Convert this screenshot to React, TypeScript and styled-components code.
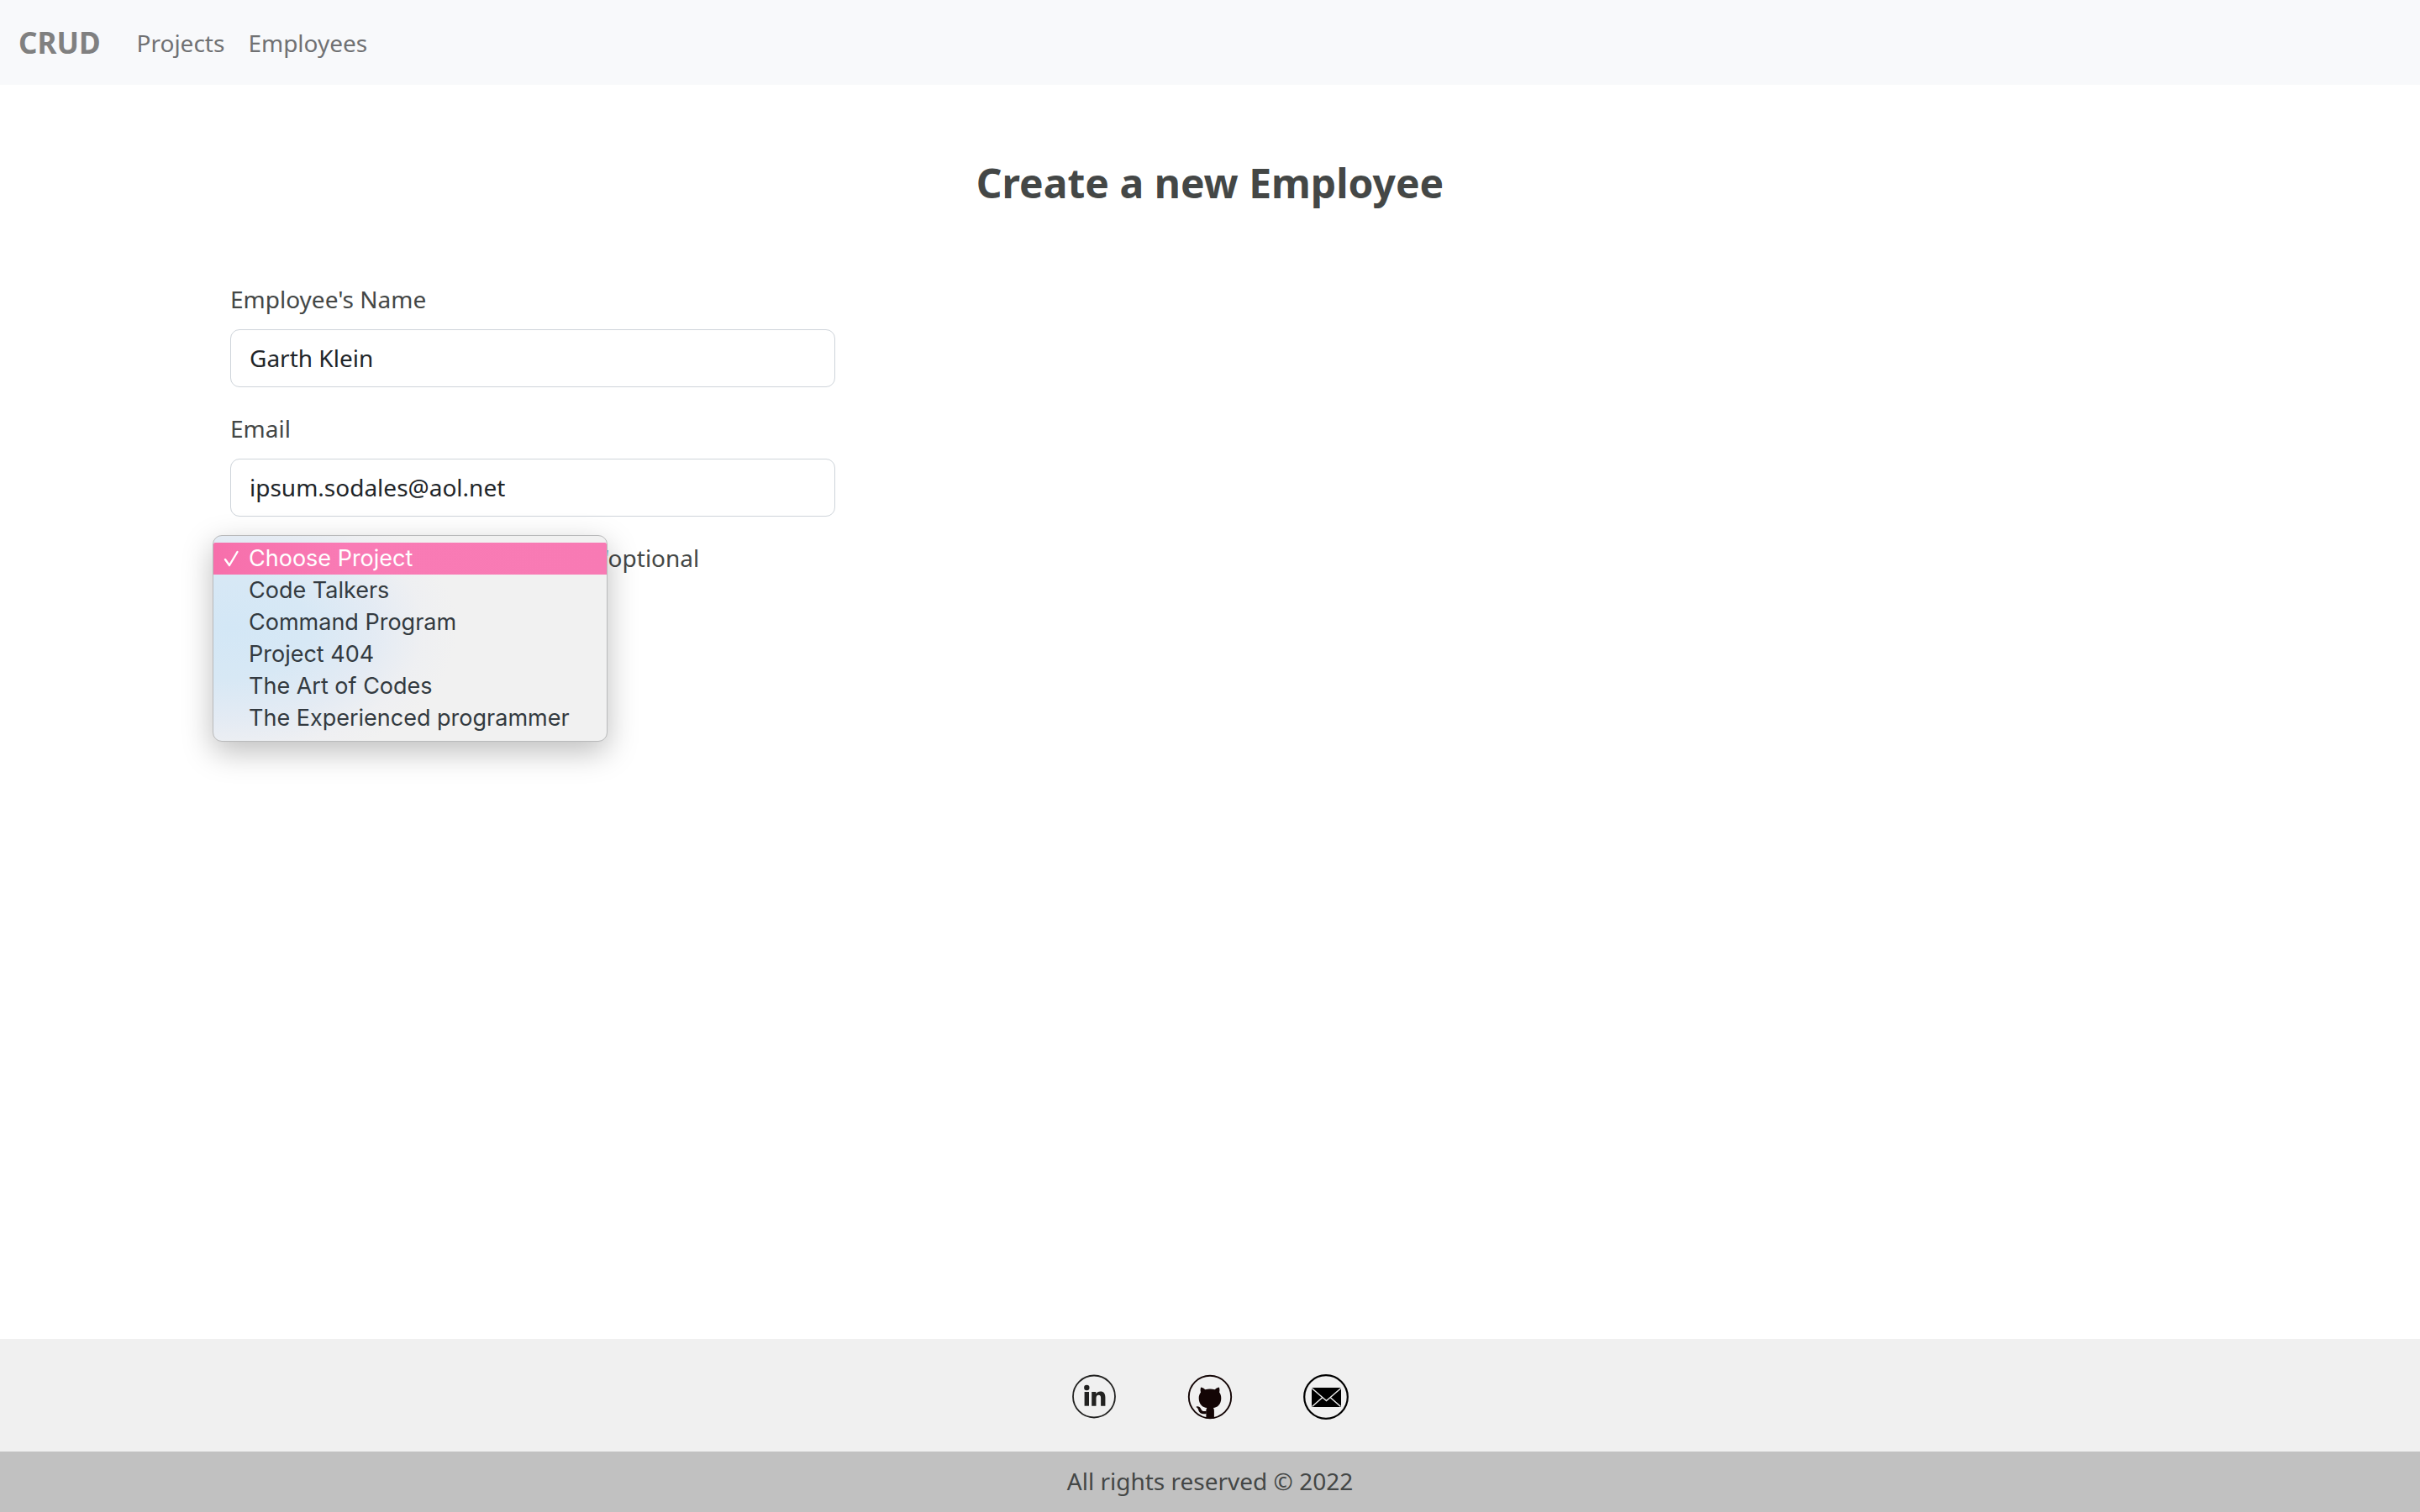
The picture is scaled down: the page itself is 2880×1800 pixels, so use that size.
import React from 'react';
import styled, { createGlobalStyle } from 'styled-components';

const GlobalStyle = createGlobalStyle`
  *, *::before, *::after { box-sizing: border-box; }
  body {
    margin: 0;
    background: #fff;
    color: #444746;
    font-family: "Noto Sans", "Open Sans", sans-serif;
    font-size: 28px;
    line-height: 43px;
  }
`;

const Page = styled.div`
  display: flex;
  flex-direction: column;
  min-height: 100vh;
`;

const Navbar = styled.nav`
  display: flex;
  align-items: center;
  gap: 43px;
  padding: 25px 22px 24px;
  background: #f8f9fb;
`;

const Brand = styled.a`
  color: #808080;
  font-size: 35px;
  font-weight: 700;
  line-height: 52px;
  text-decoration: none;
`;

const NavLinks = styled.div`
  display: flex;
  gap: 28px;
`;

const NavLink = styled.a`
  color: #707173;
  text-decoration: none;
`;

const Main = styled.main`
  flex: 1;
  width: 100%;
  max-width: 2376px;
  margin: 0 auto;
  padding: 87px 22px;
`;

const Title = styled.h1`
  margin: 0 0 87px;
  font-size: 48px;
  font-weight: 700;
  line-height: 60px;
  text-align: center;
`;

const Form = styled.form`
  display: flex;
  flex-direction: column;
  gap: 28px;
  max-width: 720px;
`;

const Field = styled.div`
  display: flex;
  flex-direction: column;
  gap: 14px;
  position: relative;
`;

const Label = styled.label<{ $indent?: boolean }>`
  padding-left: ${(p) => (p.$indent ? '445px' : '0')};
`;

const TextInput = styled.input`
  width: 100%;
  height: 69px;
  padding: 0 22px 2px;
  border: 1px solid #ced4da;
  border-radius: 11px;
  background: #fff;
  color: #212529;
  font: inherit;
  outline: none;
`;

const Menu = styled.div`
  position: absolute;
  top: -6px;
  left: -21px;
  width: 470px;
  padding: 8px 0;
  overflow: hidden;
  border: 1px solid #b9babb;
  border-radius: 11px;
  background:
    radial-gradient(ellipse 270px 170px at 20px 110px, #d3e7f6 0%, #d7e8f5 35%, rgba(226, 234, 244, 0.85) 65%, rgba(236, 238, 243, 0.5) 85%, rgba(241, 241, 241, 0) 100%),
    #f1f1f1;
  box-shadow: 0 12px 36px rgba(0, 0, 0, 0.26);
`;

const ProjectSelect = styled.select`
  display: block;
  width: 100%;
  height: 228px;
  padding: 0;
  border: 0;
  background: transparent;
  color: #333a40;
  font-family: Inter, sans-serif;
  font-size: 27px;
  outline: none;
  overflow: hidden;
  scrollbar-width: none;

  option {
    height: 38px;
    min-height: 38px;
    padding: 2px 0 0 42px;
    line-height: 36px;
  }

  option:checked {
    background: linear-gradient(90deg, #f76fab, #f97bb5 35%, #f87ab4);
    -webkit-text-fill-color: #fff;
  }
`;

const CheckMark = styled.svg`
  position: absolute;
  top: 17px;
  left: 12px;
  width: 20px;
  height: 20px;
  pointer-events: none;
`;

const SocialBar = styled.div`
  display: flex;
  justify-content: center;
  align-items: center;
  gap: 84px;
  padding: 42px 0 38px;
  background: #f0f0f0;
`;

const SocialLink = styled.a`
  display: flex;
`;

const SocialIcon = styled.svg`
  width: 54px;
  height: 54px;
`;

const Copyright = styled.p`
  margin: 0;
  padding: 14px 0 15px;
  background: #c1c1c1;
  text-align: center;
`;

const projects = [
  'Choose Project',
  'Code Talkers',
  'Command Program',
  'Project 404',
  'The Art of Codes',
  'The Experienced programmer',
];

const LinkedInIcon = () => (
  <SocialIcon viewBox="0 0 54 54" aria-hidden="true">
    <circle cx="27" cy="26.5" r="25" fill="none" stroke="#222221" strokeWidth="1.8" />
    <g fill="#222221">
      <circle cx="18.3" cy="16" r="3.2" />
      <path d="M15.6 21h5.4v16.7h-5.4z" />
      <path d="M24.2 21h5.1v2.3c1.1-1.7 2.9-2.8 5.2-2.8 4.3 0 5.9 2.7 5.9 7.1v10.1h-5.3v-9.3c0-2.4-.7-3.7-2.6-3.7-2 0-3 1.4-3 3.8v9.2h-5.3z" />
    </g>
  </SocialIcon>
);

const GitHubIcon = () => (
  <SocialIcon viewBox="0 0 54 54" aria-hidden="true">
    <circle cx="27" cy="27" r="25.2" fill="none" stroke="#130505" strokeWidth="1.9" />
    <g fill="#130505">
      <path d="M16.2 15.4c2.1.4 3.8 1.5 5.2 2.9 3.6-1 7.6-1 11.2 0 1.4-1.4 3.1-2.5 5.2-2.9.8 2 .8 4.1.3 6 1.5 1.9 2.2 4.3 2.2 7 0 7.2-4.3 11.2-9.4 11.5.7 1 1 2 1 3.4v9.1c-3 .8-6.5.8-9.5 0V43.3c0-1.4.3-2.4 1-3.4-5.2-.3-9.7-4.3-9.7-11.5 0-2.7.8-5.1 2.3-7-.5-1.9-.6-4 .2-6z" />
      <path d="M11 38.4c2.4-.5 4.2.8 5.3 3 1 2 2.3 3.1 6.4 2.4v3.1c-5.3.9-8.1-.5-9.2-3.5-.6-1.9-1-3.3-2.7-4.1-.5-.2-.3-.8.2-.9z" />
    </g>
  </SocialIcon>
);

const MailIcon = () => (
  <SocialIcon viewBox="0 0 54 54" aria-hidden="true">
    <circle cx="27" cy="27" r="25.8" fill="none" stroke="#000" strokeWidth="2.2" />
    <path d="M10 16h35v23H10z" fill="#000" />
    <path
      d="M10 16.5l14.8 12.8 2.7 2.3 2.7-2.3L45 16.5M10.5 38.5l12.5-11M44.5 38.5L32 27.5"
      fill="none"
      stroke="#f0f0f0"
      strokeWidth="1.4"
    />
  </SocialIcon>
);

export default function App() {
  return (
    <>
      <GlobalStyle />
      <Page>
        <Navbar>
          <Brand href="#home">CRUD</Brand>
          <NavLinks>
            <NavLink href="#projects">Projects</NavLink>
            <NavLink href="#employees">Employees</NavLink>
          </NavLinks>
        </Navbar>
        <Main>
          <Title>Create a new Employee</Title>
          <Form>
            <Field>
              <Label htmlFor="name">Employee's Name</Label>
              <TextInput id="name" type="text" defaultValue="Garth Klein" />
            </Field>
            <Field>
              <Label htmlFor="email">Email</Label>
              <TextInput id="email" type="email" defaultValue="ipsum.sodales@aol.net" />
            </Field>
            <Field>
              <Label htmlFor="project" $indent>'optional</Label>
              <Menu>
                <ProjectSelect id="project" size={6} defaultValue={projects[0]}>
                  {projects.map((project) => (
                    <option key={project} value={project}>{project}</option>
                  ))}
                </ProjectSelect>
                <CheckMark viewBox="0 0 20 20" aria-hidden="true">
                  <path d="M2 11l5 7L16.5 2" fill="none" stroke="#fff" strokeWidth="2.4" strokeLinecap="round" strokeLinejoin="round" />
                </CheckMark>
              </Menu>
            </Field>
          </Form>
        </Main>
        <footer>
          <SocialBar>
            <SocialLink href="#linkedin" aria-label="LinkedIn"><LinkedInIcon /></SocialLink>
            <SocialLink href="#github" aria-label="GitHub"><GitHubIcon /></SocialLink>
            <SocialLink href="#mail" aria-label="Email"><MailIcon /></SocialLink>
          </SocialBar>
          <Copyright>All rights reserved © 2022</Copyright>
        </footer>
      </Page>
    </>
  );
}
